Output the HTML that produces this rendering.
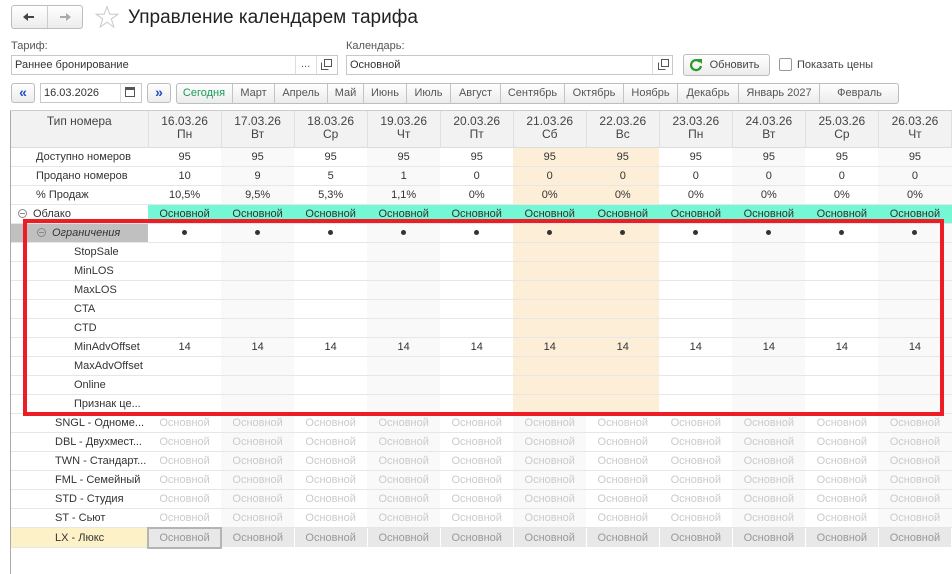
<!DOCTYPE html><html><head><meta charset="utf-8"><style>
*{box-sizing:border-box;margin:0;padding:0}
body{width:952px;height:574px;background:#fff;font-family:"Liberation Sans",Arial,sans-serif;font-size:11px;color:#333;position:relative;overflow:hidden}
.a{position:absolute}
.btn{position:absolute;border:1px solid #bdbdbd;border-radius:3px;background:linear-gradient(#fff,#ececec);text-align:center;color:#444}
.inp{position:absolute;border:1px solid #c8c8c8;background:#fff;height:20px;line-height:18px;padding-left:3px;color:#333}
table{position:absolute;left:11px;top:111px;border-collapse:collapse;table-layout:fixed;width:941px}
td{height:19px;padding:0;text-align:center;white-space:nowrap;overflow:hidden;border-bottom:1px solid #e6e6e6;line-height:18px}
td.f{text-align:left}
tr.h td{height:36px;background:#f2f2f2;border-right:1px solid #e0e0e0;border-bottom:1px solid #dcdcdc;line-height:13px;vertical-align:top;padding-top:4px;color:#444;font-size:12px}
.g{background:#f9f9f9}.o{background:#fdeed8}
tr.t td{background:#74f7d4}tr.t td.f{background:#fff}
.lt td{color:#cacaca}
tr.lx td{background:#e8e8e8;border:1px solid #fff;color:#999}
tr.lx td.f{background:#fdf1c8;border:none;border-bottom:1px solid #e6e6e6;color:#333}
.c{display:inline-block;width:9px;height:9px;border:1px solid #888;border-radius:50%;position:relative;vertical-align:-1px;margin-right:6px}
.c:after{content:"";position:absolute;left:1px;top:3px;width:5px;height:1px;background:#888}
.d{display:inline-block;width:5px;height:5px;border-radius:50%;background:#333;vertical-align:1px}
.m span{text-align:center;border-left:1px solid #c4c4c4;height:20px;line-height:19px}
</style></head><body>
<div class="btn" style="left:11px;top:5px;width:72px;height:24px"></div>
<div class="a" style="left:47px;top:6px;width:1px;height:22px;background:#ccc"></div>
<svg class="a" style="left:23px;top:12px" width="12" height="10"><path d="M2 5H11" stroke="#444" stroke-width="2"/><path d="M0 5L5 1V9Z" fill="#444"/></svg>
<svg class="a" style="left:59px;top:12px" width="12" height="10"><path d="M1 5H10" stroke="#aaa" stroke-width="2"/><path d="M12 5L7 1V9Z" fill="#aaa"/></svg>
<svg class="a" style="left:95px;top:5px" width="24" height="24"><path d="M12 1.5L14.8 9.3H22.8L16.4 14L18.8 22L12 17.2L5.2 22L7.6 14L1.2 9.3H9.2Z" fill="none" stroke="#c8c8c8" stroke-width="1"/></svg>
<div class="a" style="left:128px;top:7px;font-size:19px;color:#222">Управление календарем тарифа</div>
<div class="a" style="left:11px;top:40px;color:#555">Тариф:</div>
<div class="a" style="left:346px;top:40px;color:#555">Календарь:</div>
<div class="inp" style="left:11px;top:55px;width:327px">Раннее бронирование</div>
<div class="a" style="left:295px;top:56px;width:1px;height:18px;background:#ddd"></div>
<div class="a" style="left:301px;top:58px;color:#555">...</div>
<div class="a" style="left:316px;top:56px;width:1px;height:18px;background:#ddd"></div>
<svg class="a" style="left:321px;top:59px" width="12" height="12"><path d="M3.5 0.5H10.5V7.5H3.5ZM0.5 3.5V10.5H7.5" fill="none" stroke="#555"/></svg>
<div class="inp" style="left:346px;top:55px;width:327px">Основной</div>
<div class="a" style="left:652px;top:56px;width:1px;height:18px;background:#ddd"></div>
<svg class="a" style="left:658px;top:59px" width="12" height="12"><path d="M3.5 0.5H10.5V7.5H3.5ZM0.5 3.5V10.5H7.5" fill="none" stroke="#555"/></svg>
<div class="btn" style="left:683px;top:54px;width:87px;height:22px;line-height:20px;padding-left:16px">Обновить</div>
<svg class="a" style="left:689px;top:58px" width="14" height="14"><path d="M11 4A5 5 0 1 0 12 8" fill="none" stroke="#2a9a2a" stroke-width="2.2"/><path d="M8 1H13V6Z" fill="#2a9a2a"/></svg>
<div class="a" style="left:779px;top:58px;width:13px;height:13px;border:1px solid #999;border-radius:2px"></div>
<div class="a" style="left:797px;top:59px;color:#444">Показать цены</div>
<div class="btn" style="left:11px;top:83px;width:24px;height:20px;color:#1a4fc0;font-weight:bold;line-height:17px;font-size:14px">«</div>
<div class="inp" style="left:40px;top:83px;width:102px">16.03.2026</div>
<div class="a" style="left:120px;top:84px;width:1px;height:18px;background:#ddd"></div>
<div class="a" style="left:125px;top:87px;width:10px;height:10px;border:1px solid #555;border-top:3px solid #555"></div>
<div class="btn" style="left:147px;top:83px;width:24px;height:20px;color:#1a4fc0;font-weight:bold;line-height:17px;font-size:14px">»</div>
<div class="btn" style="left:176px;top:83px;width:723px;height:21px"></div>
<div class="a m" style="left:176px;top:84px;width:723px;display:flex;color:#555">
<span style="width:56px;color:#1a9a5a;border:none">Сегодня</span>
<span style="width:42px">Март</span>
<span style="width:53px">Апрель</span>
<span style="width:36px">Май</span>
<span style="width:43px">Июнь</span>
<span style="width:44px">Июль</span>
<span style="width:50px">Август</span>
<span style="width:64px">Сентябрь</span>
<span style="width:59px">Октябрь</span>
<span style="width:54px">Ноябрь</span>
<span style="width:61px">Декабрь</span>
<span style="width:81px">Январь 2027</span>
<span style="width:80px">Февраль</span>
</div>
<div class="a" style="left:10px;top:110px;width:1px;height:464px;background:#aaa"></div>
<div class="a" style="left:10px;top:110px;width:942px;height:1px;background:#ccc"></div>
<table>
<colgroup><col style="width:137px"><col span="11" style="width:73px"></colgroup>
<tr class="h"><td>Тип номера</td><td>16.03.26<br>Пн</td><td>17.03.26<br>Вт</td><td>18.03.26<br>Ср</td><td>19.03.26<br>Чт</td><td>20.03.26<br>Пт</td><td>21.03.26<br>Сб</td><td>22.03.26<br>Вс</td><td>23.03.26<br>Пн</td><td>24.03.26<br>Вт</td><td>25.03.26<br>Ср</td><td>26.03.26<br>Чт</td></tr>
<tr><td class="f" style="padding-left:25px">Доступно номеров</td><td>95</td><td class="g">95</td><td>95</td><td class="g">95</td><td>95</td><td class="o">95</td><td class="o">95</td><td>95</td><td class="g">95</td><td>95</td><td class="g">95</td></tr>
<tr><td class="f" style="padding-left:25px">Продано номеров</td><td>10</td><td class="g">9</td><td>5</td><td class="g">1</td><td>0</td><td class="o">0</td><td class="o">0</td><td>0</td><td class="g">0</td><td>0</td><td class="g">0</td></tr>
<tr><td class="f" style="padding-left:25px">% Продаж</td><td>10,5%</td><td class="g">9,5%</td><td>5,3%</td><td class="g">1,1%</td><td>0%</td><td class="o">0%</td><td class="o">0%</td><td>0%</td><td class="g">0%</td><td>0%</td><td class="g">0%</td></tr>
<tr class="t"><td class="f" style="padding-left:7px"><span class="c"></span>Облако</td><td>Основной</td><td>Основной</td><td>Основной</td><td>Основной</td><td>Основной</td><td>Основной</td><td>Основной</td><td>Основной</td><td>Основной</td><td>Основной</td><td>Основной</td></tr>
<tr><td class="f" style="padding-left:26px;background:#c0c0c0;font-style:italic"><span class="c"></span>Ограничения</td><td><span class="d"></span></td><td class="g"><span class="d"></span></td><td><span class="d"></span></td><td class="g"><span class="d"></span></td><td><span class="d"></span></td><td class="o"><span class="d"></span></td><td class="o"><span class="d"></span></td><td><span class="d"></span></td><td class="g"><span class="d"></span></td><td><span class="d"></span></td><td class="g"><span class="d"></span></td></tr>
<tr><td class="f" style="padding-left:63px">StopSale</td><td></td><td class="g"></td><td></td><td class="g"></td><td></td><td class="o"></td><td class="o"></td><td></td><td class="g"></td><td></td><td class="g"></td></tr>
<tr><td class="f" style="padding-left:63px">MinLOS</td><td></td><td class="g"></td><td></td><td class="g"></td><td></td><td class="o"></td><td class="o"></td><td></td><td class="g"></td><td></td><td class="g"></td></tr>
<tr><td class="f" style="padding-left:63px">MaxLOS</td><td></td><td class="g"></td><td></td><td class="g"></td><td></td><td class="o"></td><td class="o"></td><td></td><td class="g"></td><td></td><td class="g"></td></tr>
<tr><td class="f" style="padding-left:63px">CTA</td><td></td><td class="g"></td><td></td><td class="g"></td><td></td><td class="o"></td><td class="o"></td><td></td><td class="g"></td><td></td><td class="g"></td></tr>
<tr><td class="f" style="padding-left:63px">CTD</td><td></td><td class="g"></td><td></td><td class="g"></td><td></td><td class="o"></td><td class="o"></td><td></td><td class="g"></td><td></td><td class="g"></td></tr>
<tr><td class="f" style="padding-left:63px">MinAdvOffset</td><td>14</td><td class="g">14</td><td>14</td><td class="g">14</td><td>14</td><td class="o">14</td><td class="o">14</td><td>14</td><td class="g">14</td><td>14</td><td class="g">14</td></tr>
<tr><td class="f" style="padding-left:63px">MaxAdvOffset</td><td></td><td class="g"></td><td></td><td class="g"></td><td></td><td class="o"></td><td class="o"></td><td></td><td class="g"></td><td></td><td class="g"></td></tr>
<tr><td class="f" style="padding-left:63px">Online</td><td></td><td class="g"></td><td></td><td class="g"></td><td></td><td class="o"></td><td class="o"></td><td></td><td class="g"></td><td></td><td class="g"></td></tr>
<tr><td class="f" style="padding-left:63px">Признак це...</td><td></td><td class="g"></td><td></td><td class="g"></td><td></td><td class="o"></td><td class="o"></td><td></td><td class="g"></td><td></td><td class="g"></td></tr>
<tr class="lt"><td class="f" style="padding-left:44px;color:#333">SNGL - Одноме...</td><td>Основной</td><td class="g">Основной</td><td>Основной</td><td class="g">Основной</td><td>Основной</td><td class="g">Основной</td><td>Основной</td><td>Основной</td><td class="g">Основной</td><td>Основной</td><td class="g">Основной</td></tr>
<tr class="lt"><td class="f" style="padding-left:44px;color:#333">DBL - Двухмест...</td><td>Основной</td><td class="g">Основной</td><td>Основной</td><td class="g">Основной</td><td>Основной</td><td class="g">Основной</td><td>Основной</td><td>Основной</td><td class="g">Основной</td><td>Основной</td><td class="g">Основной</td></tr>
<tr class="lt"><td class="f" style="padding-left:44px;color:#333">TWN - Стандарт...</td><td>Основной</td><td class="g">Основной</td><td>Основной</td><td class="g">Основной</td><td>Основной</td><td class="g">Основной</td><td>Основной</td><td>Основной</td><td class="g">Основной</td><td>Основной</td><td class="g">Основной</td></tr>
<tr class="lt"><td class="f" style="padding-left:44px;color:#333">FML - Семейный</td><td>Основной</td><td class="g">Основной</td><td>Основной</td><td class="g">Основной</td><td>Основной</td><td class="g">Основной</td><td>Основной</td><td>Основной</td><td class="g">Основной</td><td>Основной</td><td class="g">Основной</td></tr>
<tr class="lt"><td class="f" style="padding-left:44px;color:#333">STD - Студия</td><td>Основной</td><td class="g">Основной</td><td>Основной</td><td class="g">Основной</td><td>Основной</td><td class="g">Основной</td><td>Основной</td><td>Основной</td><td class="g">Основной</td><td>Основной</td><td class="g">Основной</td></tr>
<tr class="lt"><td class="f" style="padding-left:44px;color:#333">ST - Сьют</td><td>Основной</td><td class="g">Основной</td><td>Основной</td><td class="g">Основной</td><td>Основной</td><td class="g">Основной</td><td>Основной</td><td>Основной</td><td class="g">Основной</td><td>Основной</td><td class="g">Основной</td></tr>
<tr class="lx"><td class="f" style="padding-left:44px">LX - Люкс</td><td style="border:2px solid #b4b4b4">Основной</td><td>Основной</td><td>Основной</td><td>Основной</td><td>Основной</td><td>Основной</td><td>Основной</td><td>Основной</td><td>Основной</td><td>Основной</td><td>Основной</td></tr>
</table>
<div class="a" style="left:23px;top:219px;width:921px;height:197px;border:4px solid #ee1c25"></div>
</body></html>
